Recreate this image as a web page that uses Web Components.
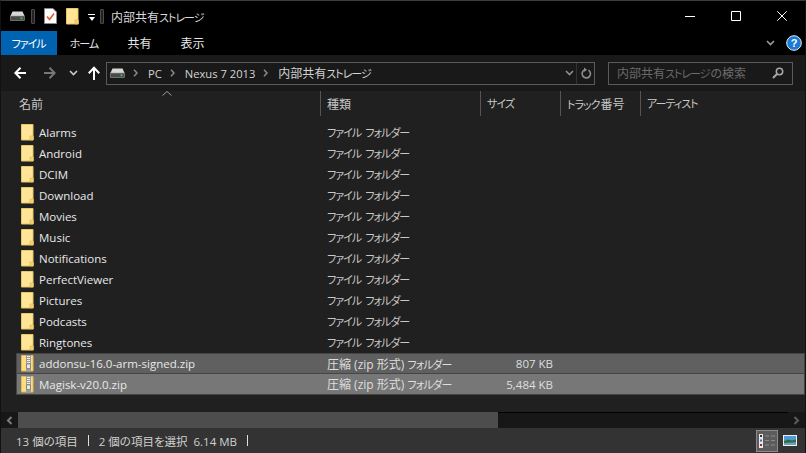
<!DOCTYPE html>
<html lang="ja">
<head>
<meta charset="utf-8">
<title>内部共有ストレージ</title>
<style>
html, body { margin: 0; height: 100%; background: #000; overflow: hidden; }
body { font: 12px "Open Sans", "Noto Sans CJK JP", sans-serif; font-feature-settings: "palt"; color: #e6e6e6; }
</style>
</head>
<body>
<explorer-window>
  <title-bar label="内部共有ストレージ"></title-bar>
  <ribbon-tabs></ribbon-tabs>
  <nav-bar></nav-bar>
  <column-header></column-header>
  <file-list>
    <file-row name="Alarms" type="ファイル フォルダー"></file-row>
    <file-row name="Android" type="ファイル フォルダー"></file-row>
    <file-row name="DCIM" type="ファイル フォルダー"></file-row>
    <file-row name="Download" type="ファイル フォルダー"></file-row>
    <file-row name="Movies" type="ファイル フォルダー"></file-row>
    <file-row name="Music" type="ファイル フォルダー"></file-row>
    <file-row name="Notifications" type="ファイル フォルダー"></file-row>
    <file-row name="PerfectViewer" type="ファイル フォルダー"></file-row>
    <file-row name="Pictures" type="ファイル フォルダー"></file-row>
    <file-row name="Podcasts" type="ファイル フォルダー"></file-row>
    <file-row name="Ringtones" type="ファイル フォルダー"></file-row>
    <file-row name="addonsu-16.0-arm-signed.zip" type="圧縮 (zip 形式) フォルダー" size="807 KB" icon="zip" selected="dim"></file-row>
    <file-row name="Magisk-v20.0.zip" type="圧縮 (zip 形式) フォルダー" size="5,484 KB" icon="zip" selected="hot"></file-row>
  </file-list>
  <h-scrollbar></h-scrollbar>
  <status-bar></status-bar>
</explorer-window>

<script>
const ICONS = {
    drive: `<svg width="15" height="10" viewBox="0 0 15 10"><path d="M2.500 .5h10L14.500 5h-14z" fill="#d8d8d8"/><rect x=".5" y="5" width="14" height="4.500" fill="#4a4a4a" stroke="#9a9a9a" stroke-width=".6"/><rect x="10.500" y="6.500" width="2" height="1.600" fill="#37d04a"/></svg>`,
    check: `<svg width="13" height="16" viewBox="0 0 13 16"><path d="M.5.500h8.500l3.500 3.500v11.500H.5z" fill="#fff" stroke="#8a8a8a"/><path d="M3 8.500l2.500 3 4.500-6" fill="none" stroke="#e8562a" stroke-width="1.500"/></svg>`,
    folder: `<svg width="13" height="17" viewBox="0 0 13 17"><path d="M.5.500h11.500v15.500H.5z" fill="#ffe595" stroke="#e9c766"/><path d="M9 16v-4h3.500v4z" fill="#f6d274" stroke="#dcb552" stroke-width=".6"/></svg>`,
    zip: `<svg width="13" height="17" viewBox="0 0 13 17"><path d="M.5.500h11.500v15.500H.5z" fill="#ffdc7c" stroke="#e3bc55"/><rect x="5" y="0" width="5" height="16.500" fill="#9d9d9d"/><path d="M6 1.500h3M6 3.500h3M6 5.500h3M6 7.500h3" stroke="#eee"/><rect x="5.700" y="9" width="3.600" height="4.500" fill="#e8e8e8" stroke="#666" stroke-width=".6"/></svg>`,
    arrow: `<svg width="12" height="12" viewBox="0 0 12 12"><path d="M12 6H1.500M6.500 .8L1.300 6l5.200 5.200" fill="none" stroke="currentColor" stroke-width="2"/></svg>`,
    up: `<svg width="12" height="14" viewBox="0 0 12 14"><path d="M6 14V2M.8 7.200L6 1.700l5.200 5.500" fill="none" stroke="currentColor" stroke-width="2"/></svg>`,
    chev: `<svg width="9" height="6" viewBox="0 0 9 6"><path d="M1 1l3.500 3.500L8 1" fill="none" stroke="currentColor" stroke-width="1.600"/></svg>`,
    crumb: `<svg width="5" height="8" viewBox="0 0 5 8"><path d="M1 .8L4 4 1 7.200" fill="none" stroke="#8a8a8a" stroke-width="1.500"/></svg>`,
    refresh: `<svg width="12" height="13" viewBox="0 0 12 13"><path d="M4.800 2.800a4.200 4.200 0 1 0 3.600.3" fill="none" stroke="#8f8f8f" stroke-width="1.600"/><path d="M4 .5v4.400l3-2.200z" fill="#8f8f8f"/></svg>`,
    search: `<svg width="12" height="12" viewBox="0 0 12 12"><circle cx="7.500" cy="4.500" r="3.200" fill="none" stroke="#a8a8a8" stroke-width="1.500"/><path d="M5 7L1 11" stroke="#a8a8a8" stroke-width="2"/></svg>`,
    min: `<svg width="10" height="1" viewBox="0 0 10 1"><path d="M0 .5h10" stroke="#fff"/></svg>`,
    max: `<svg width="10" height="10" viewBox="0 0 10 10"><path d="M.5.500h9v9h-9z" fill="none" stroke="#fff"/></svg>`,
    close: `<svg width="10" height="10" viewBox="0 0 10 10"><path d="M.3.300l9.400 9.400M9.700.300L.3 9.700" stroke="#fff" stroke-width="1"/></svg>`,
    help: `<svg width="16" height="16" viewBox="0 0 16 16"><circle cx="8" cy="8" r="7.300" fill="#1a7ad4" stroke="#e8eef5" stroke-width="1"/><text x="8" y="12" text-anchor="middle" font-family="Liberation Sans" font-weight="700" font-size="11" fill="#fff">?</text></svg>`,
    details: `<svg width="16" height="14" viewBox="0 0 16 14"><rect x="0" y="0" width="4" height="14" fill="#e8e8e8"/><rect x="1" y="1" width="2" height="2" fill="#333"/><rect x="1" y="5.500" width="2" height="2" fill="#2a6fc0"/><rect x="1" y="10" width="2" height="2" fill="#b02020"/><path d="M6 2h4M12 2h4M6 6.500h4M12 6.500h4M6 11h4M12 11h4" stroke="#8c8c8c"/></svg>`,
    preview: `<svg width="14" height="11" viewBox="0 0 14 11"><rect width="14" height="11" fill="#eee"/><rect x="1" y="1" width="12" height="9" fill="#4f9ad8"/><path d="M1 6l4-1.500 4 1 4-1V10H1z" fill="#2f6b45"/><path d="M1 8l12-.8V10H1z" fill="#6aa0b8"/></svg>`
};

class AppIcon extends HTMLElement
{
    constructor()
    {
        super();
        this.attachShadow({mode: "open"});
    }

    connectedCallback()
    {
        this.shadowRoot.innerHTML = `<style>:host { display: inline-flex; flex: none; align-items: center; justify-content: center; } svg { display: block; }</style>${ICONS[this.getAttribute("name")]}`;
    }
}
customElements.define("app-icon", AppIcon);

// the reference font has much narrower katakana than Noto, so those runs get squeezed
class JpText extends HTMLElement
{
    constructor()
    {
        super();
        this.attachShadow({mode: "open"});
    }

    connectedCallback()
    {
        const text = this.getAttribute("text").replace(/[ァ-ヶー]+/g, run => `<span>${run}</span>`);
        this.shadowRoot.innerHTML = `<style>
            :host { display: inline; white-space: nowrap; font-size: 12px; }
            span { font-size: 11px; letter-spacing: -1px; margin-right: 1px; }
        </style>${text}`;
    }
}
customElements.define("jp-text", JpText);

class ExplorerWindow extends HTMLElement
{
    constructor()
    {
        super();
        this.attachShadow({mode: "open"}).innerHTML = `<style>
            :host { display: flex; flex-direction: column; height: 453px; box-sizing: border-box; background: #202020; border-top: 1px solid #3c3c3c; border-left: 1px solid #111; border-right: 1px solid #111; }
        </style><slot></slot>`;
    }
}
customElements.define("explorer-window", ExplorerWindow);

class TitleBar extends HTMLElement
{
    constructor()
    {
        super();
        this.attachShadow({mode: "open"});
    }

    connectedCallback()
    {
        this.shadowRoot.innerHTML = `<style>
            :host { display: flex; align-items: center; height: 30px; flex: none; background: #000; color: #d9d9d9; }
            .quick { display: flex; align-items: center; padding-left: 9px; }
            .sep { width: 2px; height: 13px; border: 1px solid #4c4c4c; border-radius: 1px; background: #222; }
            .text { margin-left: 7px; padding-top: 1px; }
            .ctl { margin-left: auto; display: flex; }
            .ctl app-icon { width: 46px; height: 30px; }
            .drop { display: flex; flex-direction: column; align-items: center; gap: 2px; width: 7px; margin: 2px 5px 0 9px; }
            .drop i { display: block; }
            .drop i:first-child { width: 7px; height: 1px; background: #fff; }
            .drop i:last-child { border: 3.500px solid transparent; border-top: 4px solid #fff; border-bottom: 0; }
        </style>
        <div class="quick">
            <app-icon name="drive"></app-icon>
            <span class="sep" style="margin:0 9px 0 6px"></span>
            <app-icon name="check"></app-icon>
            <app-icon name="folder" style="margin-left:9px"></app-icon>
            <span class="drop"><i></i><i></i></span>
            <span class="sep"></span>
        </div>
        <span class="text"><jp-text text="${this.getAttribute("label")}"></jp-text></span>
        <div class="ctl"><app-icon name="min"></app-icon><app-icon name="max"></app-icon><app-icon name="close"></app-icon></div>`;
    }
}
customElements.define("title-bar", TitleBar);

class RibbonTabs extends HTMLElement
{
    constructor()
    {
        super();
        this.attachShadow({mode: "open"}).innerHTML = `<style>
            :host { display: flex; align-items: stretch; height: 24px; flex: none; background: #000; color: #e6e6e6; }
            span { display: flex; align-items: center; justify-content: center; }
            .file { width: 56px; background: #0063b1; color: #fff; }
            .right { margin-left: auto; display: flex; align-items: center; gap: 11px; padding: 0 3px 0 0; color: #9c9c9c; }
        </style>
        <span class="file"><jp-text text="ファイル"></jp-text></span>
        <span style="width:55px"><jp-text text="ホーム"></jp-text></span>
        <span style="width:55px">共有</span>
        <span style="width:51px">表示</span>
        <div class="right"><app-icon name="chev"></app-icon><app-icon name="help"></app-icon></div>`;
    }
}
customElements.define("ribbon-tabs", RibbonTabs);

class NavBar extends HTMLElement
{
    constructor()
    {
        super();
        this.attachShadow({mode: "open"}).innerHTML = `<style>
            :host { display: flex; align-items: center; height: 36px; flex: none; box-sizing: border-box; padding: 0 11px 0 13px; background: #191919; color: #fff; }
            .box { display: flex; align-items: center; box-sizing: border-box; height: 23px; border: 1px solid #5a5a5a; color: #d4d4d4; }
            .addr { width: 489px; margin-left: 6px; padding-left: 3px; font-size: 11.200px; }
            .addr app-icon[name="crumb"] { margin: 0 10px 0 8px; }
            .tail { margin-left: auto; display: flex; align-items: center; height: 100%; color: #8f8f8f; }
            .tail .c { width: 14px; }
            .tail .r { width: 17px; height: 100%; border-left: 1px solid #333; }
            .search { width: 185px; margin-left: 13px; padding: 0 8px 0 8px; color: #6b6b6b; justify-content: space-between; }
        </style>
        <app-icon name="arrow"></app-icon>
        <app-icon name="arrow" style="color:#777;transform:scaleX(-1);margin-left:18px"></app-icon>
        <app-icon name="chev" style="color:#ccc;margin-left:13px"></app-icon>
        <app-icon name="up" style="margin-left:10px"></app-icon>
        <div class="box addr">
            <app-icon name="drive"></app-icon>
            <app-icon name="crumb"></app-icon><span>PC</span>
            <app-icon name="crumb"></app-icon><span>Nexus 7 2013</span>
            <app-icon name="crumb"></app-icon><jp-text text="内部共有ストレージ"></jp-text>
            <div class="tail"><app-icon class="c" name="chev"></app-icon><app-icon class="r" name="refresh"></app-icon></div>
        </div>
        <div class="box search"><jp-text text="内部共有ストレージの検索"></jp-text><app-icon name="search"></app-icon></div>`;
    }
}
customElements.define("nav-bar", NavBar);

class ColumnHeader extends HTMLElement
{
    constructor()
    {
        super();
        this.attachShadow({mode: "open"}).innerHTML = `<style>
            :host { display: flex; height: 25px; flex: none; position: relative; background: #202020; color: #c8c8c8; }
            span { display: flex; align-items: center; box-sizing: border-box; padding-left: 6px; border-right: 1px solid #555; }
            span:last-of-type { border-right: 0; }
            svg { position: absolute; left: 161px; top: 0; }
        </style>
        <svg width="10" height="5" viewBox="0 0 10 5"><path d="M.5 4.500L5 .5l4.500 4" fill="none" stroke="#9a9a9a"/></svg>
        <span style="width:320px;padding-left:18px">名前</span>
        <span style="width:160px">種類</span>
        <span style="width:80px"><jp-text text="サイズ"></jp-text></span>
        <span style="width:80px"><jp-text text="トラック番号"></jp-text></span>
        <span style="width:120px"><jp-text text="アーティスト"></jp-text></span>`;
    }
}
customElements.define("column-header", ColumnHeader);

class FileList extends HTMLElement
{
    constructor()
    {
        super();
        this.attachShadow({mode: "open"}).innerHTML = `<style>
            :host { display: flex; flex-direction: column; flex: 1; padding: 6px 0 0 15px; background: #202020; }
        </style><slot></slot>`;
    }
}
customElements.define("file-list", FileList);

class FileRow extends HTMLElement
{
    constructor()
    {
        super();
        this.attachShadow({mode: "open"});
    }

    connectedCallback()
    {
        const icon = this.getAttribute("icon") || "folder";
        const size = this.getAttribute("size") || "";
        this.shadowRoot.innerHTML = `<style>
            :host { display: flex; align-items: center; height: 21px; box-sizing: border-box; color: #e8e8e8; }
            :host([selected]) { border: 1px solid #454545; }
            :host([selected="dim"]) { background: #606060; }
            :host([selected="hot"]) { background: #777; border-top: 0; }
            .name { display: flex; align-items: center; gap: 5px; width: 304px; box-sizing: border-box; padding-left: 5px; font-size: 11.500px; }
            :host([selected]) .name { width: 303px; padding-left: 4px; }
            .type { width: 150px; padding-left: 7px; color: #c8c8c8; font-size: 11.500px; }
            :host([selected]) .type { color: #dedede; }
            .size { width: 76px; text-align: right; color: #dedede; font-size: 11.500px; }
        </style>
        <div class="name"><app-icon name="${icon}"></app-icon><span>${this.getAttribute("name")}</span></div>
        <div class="type"><jp-text text="${this.getAttribute("type")}"></jp-text></div>
        <div class="size">${size}</div>`;
    }
}
customElements.define("file-row", FileRow);

class HScrollbar extends HTMLElement
{
    constructor()
    {
        super();
        this.attachShadow({mode: "open"}).innerHTML = `<style>
            :host { display: flex; height: 16px; flex: none; background: #171717; }
            .btn { width: 17px; display: flex; align-items: center; justify-content: center; }
            .thumb { width: 480px; background: #4d4d4d; }
            .track { flex: 1; border-top: 1px solid #000; }
            svg { display: block; }
        </style>
        <div class="btn"><svg width="7" height="9" viewBox="0 0 7 9"><path d="M5.500 1L2 4.500 5.500 8" fill="none" stroke="#7c7c7c" stroke-width="2"/></svg></div>
        <div class="thumb"></div>
        <div class="track"></div>
        <div class="btn"><svg width="7" height="9" viewBox="0 0 7 9"><path d="M1.500 1L5 4.500 1.500 8" fill="none" stroke="#5c5c5c" stroke-width="2"/></svg></div>`;
    }
}
customElements.define("h-scrollbar", HScrollbar);

class StatusBar extends HTMLElement
{
    constructor()
    {
        super();
        this.attachShadow({mode: "open"}).innerHTML = `<style>
            :host { display: flex; align-items: center; height: 25px; flex: none; background: #333; color: #d0d0d0; padding-left: 15px; font-size: 11.500px; }
            .bar { width: 1px; height: 11px; background: #e0e0e0; margin: 0 10px; }
            .views { margin-left: auto; display: flex; align-items: center; height: 100%; padding-right: 4px; }
            .on { width: 22px; height: 22px; box-sizing: border-box; margin-right: 1px; border: 1px solid #8a8a8a; background: #5c5c5c; display: flex; align-items: center; justify-content: center; }
            .off { width: 22px; display: flex; justify-content: center; }
        </style>
        <span>13 個の項目</span><i class="bar"></i><span>2 個の項目を選択&nbsp; 6.14 MB</span><i class="bar"></i>
        <div class="views">
            <div class="on"><app-icon name="details"></app-icon></div>
            <div class="off"><app-icon name="preview"></app-icon></div>
        </div>`;
    }
}
customElements.define("status-bar", StatusBar);
</script>
</body>
</html>
